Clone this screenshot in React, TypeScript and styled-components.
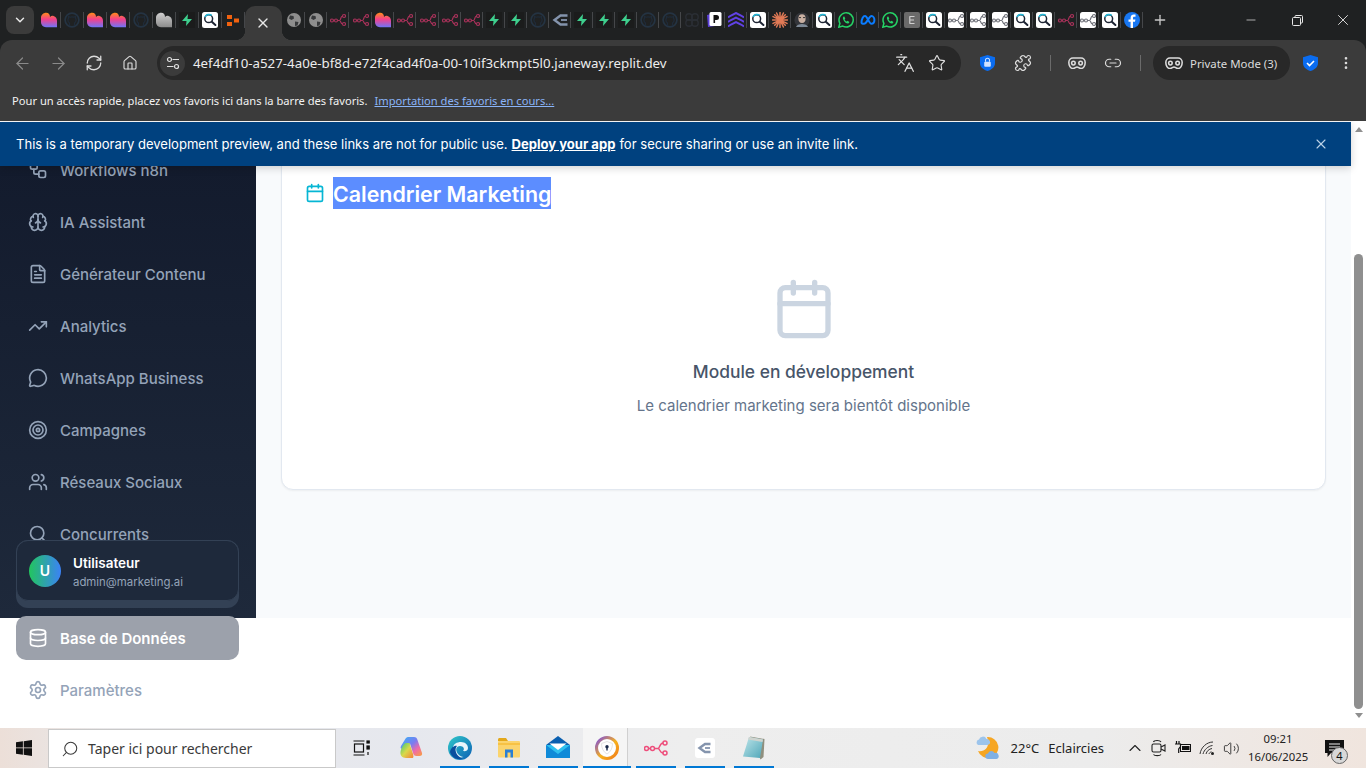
import React from 'react';
import styled, { createGlobalStyle } from 'styled-components';
import {
  ArrowLeft, ArrowRight, RefreshCw, Home, Languages, Star, Puzzle, Link2, X, Minus, Plus,
  ChevronDown, ChevronUp, Search, MoreVertical, Workflow, Brain, FileText, TrendingUp,
  MessageCircle, Target, Users, Database, Settings, Calendar, Volume2,
} from 'lucide-react';

const GlobalStyle = createGlobalStyle`
  html, body { margin: 0; padding: 0; background: #fff; overflow: hidden; }
  * { box-sizing: border-box; }
  body { font-family: Inter, "Noto Sans", sans-serif; }
`;

const Screen = styled.div`width: 1366px; height: 768px; display: flex; flex-direction: column; overflow: hidden;`;
const ChromeFrame = styled.header`background: #1f2122; flex: none; font-family: "Noto Sans", sans-serif;`;
const TabStrip = styled.div`height: 40px; display: flex; align-items: center;`;
const TabMenu = styled.button`
  width: 28px; height: 28px; margin: 0 3.5px 0 6px; border: 0; border-radius: 8px; background: #3b3b3b;
  color: #e8e8e8; display: flex; align-items: center; justify-content: center; padding: 0;
`;
const TabSlot = styled.div<{ $w: number }>`
  position: relative; width: ${p => p.$w}px; height: 40px; display: flex; align-items: center; justify-content: center; flex: none;
  &::after { content: ''; position: absolute; right: 0; top: 12px; height: 16px; width: 1px; background: #45474a; }
`;
const ActiveTab = styled.div`
  position: relative; width: 37px; height: 34px; margin-top: 6px; flex: none; background: #3b3b3b;
  border-radius: 10px 10px 0 0; color: #e8e8e8; display: flex; align-items: center; justify-content: center; padding-right: 2px; margin-left: 0.5px; margin-right: 0.5px;
  &::before, &::after { content: ''; position: absolute; bottom: 0; width: 10px; height: 10px; }
  &::before { left: -10px; background: radial-gradient(circle at 0 0, transparent 10px, #3b3b3b 10.5px); }
  &::after { right: -10px; background: radial-gradient(circle at 100% 0, transparent 10px, #3b3b3b 10.5px); }
`;
const NewTab = styled.div`margin-left: 6px; width: 22px; display: flex; justify-content: center; color: #c8c8c8;`;
const WindowControls = styled.div`margin-left: auto; display: flex; color: #e8e8e8; height: 40px;`;
const WindowButton = styled.div`width: 46px; display: flex; align-items: center; justify-content: center;`;
const ToolArea = styled.div`background: #3b3b3b; height: 81px; border-radius: 12px 12px 0 0; position: relative;`;
const ToolRow = styled.div`display: flex; align-items: center; height: 40px; padding: 6px 0 0 4px;`;
const ToolButton = styled.div<{ $dim?: boolean }>`
  width: 36px; height: 34px; display: flex; align-items: center; justify-content: center; flex: none;
  color: ${p => (p.$dim ? '#8a8a8a' : '#dcdcdc')};
`;
const AddressBar = styled.div`
  width: 804px; height: 34px; margin: 0 8px 0 9px; background: #282828; border-radius: 17px; flex: none;
  display: flex; align-items: center; padding: 0 8px 0 3px; color: #e0e0e0;
`;
const SiteButton = styled.div`
  width: 25px; height: 25px; border-radius: 50%; background: #3b3b3b; display: flex; align-items: center; justify-content: center; flex: none;
`;
const Url = styled.span`margin-left: 8px; font-size: 13.3px; color: #ededed; white-space: nowrap; flex: 1;`;
const BarIcon = styled.span`width: 32px; display: flex; justify-content: center; flex: none;`;
const ToolSep = styled.span`width: 1px; height: 16px; background: #6b6b6b; margin: 0 8px 0 9px; flex: none;`;
const PrivatePill = styled.div`
  width: 137px; height: 34px; border-radius: 17px; background: #282828; display: flex; align-items: center; gap: 7px; padding-left: 12px;
  font-size: 11.4px; color: #dcdcdc; white-space: nowrap; flex: none; margin: 0 2px 0 4px;
`;
const BookmarkBar = styled.div`
  height: 41px; padding: 0 0 0 12px; display: flex; align-items: center; font-size: 11.16px; color: #f2f2f2; white-space: nowrap; gap: 7px;
`;
const BookmarkLink = styled.a`color: #8ab4f8; text-decoration: underline;`;

const Viewport = styled.main`flex: 1; min-height: 0; display: flex; overflow: hidden; background: #fff; padding-top: 1px; background-clip: content-box;`;
const PageColumn = styled.div`flex: 1; min-width: 0; display: flex; flex-direction: column;`;
const Banner = styled.div`
  position: relative; z-index: 5; height: 44px; flex: none; background: #00417f; color: #fff; display: flex; align-items: center; padding: 0 16px;
  font-size: 13.05px; white-space: nowrap; box-shadow: 0 2px 8px rgba(0,0,0,.18);
  a { color: #fff; font-weight: 700; text-decoration: underline; margin: 0 4px; }
`;
const BannerClose = styled.span`margin-left: auto; padding-right: 6px; color: #bcd2e8; display: flex;`;
const Shell = styled.div`height: 452px; display: flex; flex: none;`;
const Sidebar = styled.aside`
  position: relative; width: 256px; flex: none; background: linear-gradient(180deg, #131b2d 0%, #1e293b 100%);
`;
const Nav = styled.nav`margin-top: -18px; padding: 0 17px 0 16px; display: flex; flex-direction: column; gap: 8px;`;
const NavItem = styled.div<{ $active?: boolean }>`
  height: 44px; border-radius: 10px; padding: 0 12px; display: flex; align-items: center; gap: 12px; font-size: 15px;
  font-weight: ${p => (p.$active ? 600 : 500)};
  color: ${p => (p.$active ? '#fff' : '#94a3b8')};
  background: ${p => (p.$active ? '#9ca1ab' : 'transparent')};
  white-space: nowrap;
`;
const UserCard = styled.div`
  position: absolute; left: 16px; bottom: 10px; width: 223px; padding-bottom: 7px; background: #334155; border-radius: 12px; z-index: 2;
`;
const UserInner = styled.div`
  height: 61px; border: 1px solid #334155; border-radius: 12px; background: #1e293b; display: flex; align-items: center; gap: 12px; padding: 0 0 0 12px;
`;
const Avatar = styled.div`
  width: 32px; height: 32px; border-radius: 50%; background: linear-gradient(90deg, #22c55e, #3b82f6); color: #fff; font-size: 14px; font-weight: 600;
  display: flex; align-items: center; justify-content: center; flex: none;
`;
const UserText = styled.div`padding-top: 4px;`;
const UserName = styled.div`font-size: 13.5px; font-weight: 600; color: #fff; line-height: 20px;`;
const UserMail = styled.div`font-size: 11.4px; color: #94a3b8; line-height: 19px;`;
const MainArea = styled.section`flex: 1; min-width: 0; background: #f8fafc; padding: 0 25px;`;
const Card = styled.div`
  margin-top: -24px; height: 348px; background: #fff; border: 1px solid #e2e8f0; border-radius: 12px; padding: 34px 23px 0;
  box-shadow: 0 1px 2px rgba(0,0,0,.05);
`;
const CardTitle = styled.h2`margin: 0; display: flex; align-items: center; gap: 8px; height: 32px; color: #06b6d4; font-size: 21.4px; font-weight: 600;`;
const Selected = styled.span`background: #5c8dff; color: #fff; line-height: 30px; padding-top: 2px; white-space: nowrap;`;
const Empty = styled.div`display: flex; flex-direction: column; align-items: center; padding-top: 68px; color: #cbd5e1;`;
const EmptyTitle = styled.h3`margin: 17px 0 8px; font-size: 17.4px; line-height: 28px; font-weight: 500; color: #475569;`;
const EmptyText = styled.p`margin: 0; font-size: 15px; line-height: 24px; color: #64748b;`;

const Scrollbar = styled.div`width: 15px; flex: none; background: #fff; display: flex; flex-direction: column; align-items: center; position: relative;`;
const ArrowUp = styled.div`margin-top: 5px; border: 4.5px solid transparent; border-top: 0; border-bottom: 5px solid #8f8f8f;`;
const Thumb = styled.div`width: 9px; height: 455px; margin-top: 122px; border-radius: 5px; background: #8f8f8f;`;
const ArrowDown = styled.div`margin-top: 4px; border: 4.5px solid transparent; border-bottom: 0; border-top: 5px solid #8f8f8f;`;

const Taskbar = styled.footer`
  height: 40px; flex: none; display: flex; align-items: stretch; color: #222; font-family: "Noto Sans", sans-serif;
  background: linear-gradient(90deg, #ecdfd8 0%, #e9e8ea 8%, #e6e8ee 30%, #eeeeee 50%, #ececec 80%, #f0e5de 100%);
`;
const StartButton = styled.div`width: 48px; display: flex; align-items: center; justify-content: center; flex: none;`;
const SearchBox = styled.div`
  width: 288px; margin-top: 1px; flex: none; background: #fff; border: 1px solid #c9c9c9; display: flex; align-items: center; padding-left: 12px; gap: 9px; font-size: 14px; color: #3a3a3a;
`;
const MirroredSearch = styled(Search)`transform: scaleX(-1);`;
const TaskView = styled.div`width: 50.5px; flex: none; display: flex; align-items: center; justify-content: center;`;
const AppSlot = styled.div<{ $open?: boolean; $active?: boolean }>`
  position: relative; width: 49px; flex: none; display: flex; align-items: center; justify-content: center;
  background: ${p => (p.$active ? 'linear-gradient(90deg, #f5f5f5 44px, #d0d0d0 44px, #d0d0d0 45px, transparent 45px)' : 'transparent')};
  &::after { content: ''; display: ${p => (p.$open ? 'block' : 'none')}; position: absolute; left: ${p => (p.$active ? 0 : '4.5px')}; right: ${p => (p.$active ? '1px' : '4.5px')}; bottom: 0; height: 2px; background: #0078d4; }
`;
const Weather = styled.div`margin-left: auto; margin-right: 19px; display: flex; align-items: center; font-size: 13px; white-space: nowrap;`;
const WeatherTemp = styled.span`margin: 0 9px 0 10px;`;
const TrayIcon = styled.div`width: 24px; flex: none; display: flex; align-items: center; justify-content: center; color: #222;`;
const Clock = styled.div`width: 60px; margin-left: 5px; font-size: 11.3px; line-height: 18px; text-align: center; display: flex; flex-direction: column; justify-content: center; white-space: nowrap;`;
const Notify = styled.div`position: relative; width: 40px; margin: 0 12px 0 6px; display: flex; align-items: center; justify-content: center;`;
const NotifyBadge = styled.span`
  position: absolute; left: 17px; top: 19px; width: 17px; height: 17px; border-radius: 50%; background: #d8d8d8; border: 1px solid #666; font-size: 11px; line-height: 15px; text-align: center; color: #111;
`;
const DefsSvg = styled.svg`position: absolute; width: 0; height: 0;`;

const Defs = () => (
  <DefsSvg aria-hidden="true">
    <defs>
      <linearGradient id="lov" x1="0" y1="0" x2="0" y2="1">
        <stop offset="0" stopColor="#ff8a1a" /><stop offset=".45" stopColor="#f4418a" /><stop offset="1" stopColor="#6f74f8" />
      </linearGradient>
      <linearGradient id="lovg" x1="0" y1="0" x2="0" y2="1">
        <stop offset="0" stopColor="#cfcfcf" /><stop offset="1" stopColor="#8c8c8c" />
      </linearGradient>
      <linearGradient id="cop" x1="0" y1="0" x2="1" y2="1">
        <stop offset="0" stopColor="#35b4f5" /><stop offset=".45" stopColor="#7b7cf0" /><stop offset=".7" stopColor="#f06aa8" /><stop offset="1" stopColor="#f9a13a" />
      </linearGradient>
      <linearGradient id="cop2" x1="0" y1="0" x2="1" y2="1">
        <stop offset="0" stopColor="#37c978" /><stop offset=".5" stopColor="#d9d94a" /><stop offset="1" stopColor="#f7803a" />
      </linearGradient>
      <linearGradient id="edge" x1="0" y1="0" x2="1" y2="1">
        <stop offset="0" stopColor="#30c9c9" /><stop offset="1" stopColor="#0c5fb5" />
      </linearGradient>
      <linearGradient id="avast" x1="0" y1="0" x2="1" y2="1">
        <stop offset="0" stopColor="#7a4be0" /><stop offset=".55" stopColor="#f7b21d" /><stop offset="1" stopColor="#f07a1a" />
      </linearGradient>
      <linearGradient id="note" x1="0" y1="0" x2="1" y2="1">
        <stop offset="0" stopColor="#bfe6ea" /><stop offset="1" stopColor="#4fa6b8" />
      </linearGradient>
    </defs>
  </DefsSvg>
);

const Svg: React.FC<{ s?: number; v?: number; children: React.ReactNode }> = ({ s = 16, v = 16, children }) => (
  <svg width={s} height={s} viewBox={`0 0 ${v} ${v}`} fill="none">{children}</svg>
);

const HEART = 'M5.2 .8C7.800 .8 9 2.800 9 5 10 4 11.200 3.600 12.500 4 14.800 4.700 16 6.600 16 9V15.200H5C2 15.200 0 12.800 0 10V6C0 3 2.300 .8 5.200 .8Z';
const N8N = (c: string) => (
  <g stroke={c} strokeWidth="1.2">
    <circle cx="2" cy="8.5" r="1.5" /><circle cx="6" cy="8.5" r="1.5" /><circle cx="14" cy="4" r="1.5" /><circle cx="14" cy="12" r="1.5" />
    <path d="M3.5 8.5h1M7.5 8.5h2c1.5 0 1-4.5 3-4.5M9.5 8.5c1.5 0 1 3.5 3 3.5" />
  </g>
);
const Chip = ({ children }: { children: React.ReactNode }) => (
  <Svg><rect width="16" height="16" rx="2.5" fill="#fff" />{children}</Svg>
);

const Fav: React.FC<{ k: string }> = ({ k }) => {
  switch (k) {
    case 'heart': return <Svg><path d={HEART} fill="url(#lov)" /></Svg>;
    case 'gray': return <Svg><path d={HEART} fill="url(#lovg)" /></Svg>;
    case 'gh': return <Svg><circle cx="8" cy="8" r="6.9" stroke="#243342" strokeWidth="1.7" /><path d="M5.5 14V11c-1-.6-1.6-1.6-1.6-3 0-.8.3-1.4.7-1.9V4.500l1.7.7c1-.3 2.300-.3 3.400 0l1.700-.7v1.600c.4.5.7 1.100.7 1.900 0 1.400-.6 2.400-1.600 3v3" stroke="#1f2b39" strokeWidth="1.2" /></Svg>;
    case 'zap': return <Svg><rect width="16" height="16" fill="#1b1c1c" /><path d="M9 2 3 9h4.500L7 14l6-7H8.500Z" fill="#3ecf8e" /></Svg>;
    case 'search': return <Chip><circle cx="6.700" cy="6.700" r="3.900" stroke="#1d2433" strokeWidth="1.500" /><path d="M3 5A4.500 4.500 0 0 1 9.700 3.300" stroke="#22b8d8" strokeWidth="1.600" /><path d="m9.800 9.800 3.600 3.200" stroke="#1d2433" strokeWidth="2" strokeLinecap="round" /></Chip>;
    case 'orange': return <Svg><path d="M2 3h5v4H2ZM2 10h5v4H2ZM9 6.500h5v4H9Z" fill="#f2620f" /></Svg>;
    case 'globe': return <Svg><circle cx="8" cy="8" r="7" fill="#8e8e8e" /><path d="M4 3.500 7.500 4l.5 2.500L5.500 8 3 6.500ZM9 9.500l3.500.5-1 3.500-2.500.5Z" fill="#37393b" /></Svg>;
    case 'n8n': return <Svg>{N8N('#a8325a')}</Svg>;
    case 'n8nw': return <Chip>{N8N('#70727a')}</Chip>;
    case 'arrow': return <Svg><path d="M15.500 3.500H8.500L2.500 8l6 4.500h7" stroke="#8494ad" strokeWidth="2.400" /><path d="M15 8H9" stroke="#8494ad" strokeWidth="1.800" /></Svg>;
    case 'figma': return <Svg><g stroke="#2a2e34" strokeWidth="1.400"><circle cx="5" cy="5" r="3.200" /><circle cx="11" cy="5" r="3.200" /><circle cx="5" cy="11" r="3.200" /><circle cx="11" cy="11" r="3.200" /></g></Svg>;
    case 'p': return <Svg><path d="M1 3l8-2v13l-7 1Z" fill="#5a3fd6" /><rect x="3.500" y="0" width="12" height="14" rx="1.500" fill="#fff" /><path d="M7.500 11V3h3a2 2 0 0 1 0 5H9.100v3Z" fill="#111" /></Svg>;
    case 'waves': return <Svg><path d="M0 5.500 3 3.500 8 1l5 2.500 3 2M0 10l3-2 5-2.500L13 8l3 2M0 14.500l3-2L8 10l5 2.500 3 2" stroke="#6142e6" strokeWidth="2" /></Svg>;
    case 'burst': return <Svg><g stroke="#e07a56" strokeWidth="1.500" strokeLinecap="round"><path d="M8 .5v15M.5 8h15M2.700 2.700l10.600 10.600M13.300 2.700 2.700 13.300M4.600 1l6.800 14M11.400 1 4.600 15M1 4.600l14 6.800M15 4.600 1 11.400" /></g></Svg>;
    case 'face': return <Svg><circle cx="8" cy="8" r="7.600" fill="#33353a" /><ellipse cx="8" cy="6.600" rx="3.600" ry="4.400" fill="#c9b0a2" /><path d="M2 15c1-4 11-4 12 0Z" fill="#7e8a98" /><path d="M5 5.600h2M9 5.600h2" stroke="#333" /></Svg>;
    case 'wa': return <Svg><path d="M.8 15.200l1.100-3.900A7.100 7.100 0 1 1 4.700 14.100Z" stroke="#25d366" strokeWidth="1.500" /><path d="M5.600 4.600c-1.200 1-.8 2.800.6 4.600s3.200 2.700 4.500 2l.8-1.200-2-1.200-.8.7C7.800 9.200 7 8.400 6.600 7.300l.7-.8-1-2Z" fill="#25d366" /></Svg>;
    case 'meta': return <Svg><path d="M1.500 10.500C1.500 7 3.200 4 5 4c2.400 0 4 7.800 6.400 7.800 1.500 0 3-1 3-3.800 0-2-1.200-4-2.900-4C9 4 7 11.800 4 11.800c-1.500 0-2.500-.5-2.500-1.300Z" stroke="#0a7cff" strokeWidth="2" /></Svg>;
    case 'e': return <Svg><rect width="16" height="16" rx="2" fill="#6a6a6a" /><path d="M5.500 4.500h5M5.500 8h4.500M5.500 11.500h5M5.800 4.500v7" stroke="#cfcfcf" strokeWidth="1.200" /></Svg>;
    case 'fb': return <Svg><circle cx="8" cy="8" r="8" fill="#1877f2" /><path d="M9 16V9.800h2l.4-2.400H9V6c0-.8.3-1.300 1.400-1.300h1.100V2.600C11 2.500 10.500 2.400 9.800 2.400 8 2.400 6.600 3.600 6.600 5.700v1.700H4.500v2.400h2.100V16Z" fill="#fff" /></Svg>;
    default: return null;
  }
};

const Mask = ({ s = 18 }: { s?: number }) => (
  <svg width={s} height={s * 0.7} viewBox="0 0 20 14" fill="none" stroke="currentColor" strokeWidth="1.700">
    <path d="M5.500 1.200h9c2.500 0 4.600 2 4.600 5s-1.800 6.600-4.600 6.600c-2 0-3-1.800-4.500-1.800s-2.500 1.800-4.500 1.800C2.700 12.800.9 9.200.9 6.200s2.100-5 4.600-5Z" />
    <circle cx="6" cy="6.800" r="2" /><circle cx="14" cy="6.800" r="2" />
  </svg>
);
const SiteIcon = () => (
  <svg width="14" height="14" viewBox="0 0 14 14" fill="none" stroke="#e0e0e0" strokeWidth="1.200">
    <circle cx="3.500" cy="3.500" r="2" /><path d="M6.500 3.500H13M1 10.500h6.500" /><circle cx="10.500" cy="10.500" r="2" />
  </svg>
);
const Shield = ({ lock }: { lock?: boolean }) => (
  <svg width="15" height="16" viewBox="0 0 15 16">
    <path d="M7.500 0 15 2.200V8c0 4-3 6.500-7.500 8C3 14.500 0 12 0 8V2.200Z" fill="#0a6cf0" />
    {lock ? <g><rect x="4.200" y="6.700" width="6.600" height="5" rx="1" fill="#cfe2ff" /><path d="M5.500 6.700V5.200a2 2 0 0 1 4 0v1.500" stroke="#cfe2ff" strokeWidth="1.100" fill="none" /></g>
      : <path d="m4 8 2.500 2.500L11 6" stroke="#fff" strokeWidth="1.600" fill="none" />}
  </svg>
);
const WinLogo = () => (
  <svg width="16" height="16" viewBox="0 0 16 16" fill="#111"><path d="M0 2.300 6.900 1.300V7.500H0ZM7.700 1.200 16 0V7.500H7.700ZM0 8.300H6.900V14.700L0 13.700ZM7.700 8.300H16V16L7.700 14.800Z" /></svg>
);
const TaskViewIcon = () => (
  <svg width="17" height="16" viewBox="0 0 17 16" fill="none" stroke="#111" strokeWidth="1.200">
    <path d="M.5 1h11M.5 15h11" /><rect x="1.500" y="4" width="9" height="8" /><rect x="14" y="1" width="2.200" height="2" fill="#111" /><rect x="14" y="6" width="2.200" height="3" fill="#111" /><path d="M15 12v3" />
  </svg>
);
const CopilotIcon = () => (
  <svg width="24" height="24" viewBox="0 0 24 24">
    <path d="M9 1h6c2 0 3 1 3.500 3L23 17c.5 2-.5 3-2.500 3h-3c-2 0-3-1-3.500-3L11 7.500 8 13H3.500C2 13 1 12 2 10L6 3.500C6.800 2 7.800 1 9 1Z" fill="url(#cop)" />
    <path d="M7 7h3.500l3.500 11c.5 2 1 4-1 4H7C3 22 1 19 1.500 16 2 12 5 7 7 7Z" fill="url(#cop2)" />
  </svg>
);
const EdgeIcon = () => (
  <svg width="24" height="24" viewBox="0 0 24 24">
    <circle cx="12" cy="12" r="12" fill="url(#edge)" />
    <path d="M5 12c0-4 4-6 8-6 4.500 0 7 3 7 6s-3 3.500-5 3c2-2 .5-5-3-5-4 0-5 4-2 8 1.500 2 4 3 5.500 3-5 2-10.500-2.500-10.500-9Z" fill="#e9f5fb" />
    <path d="M2 16c1-5 5-7 7-6-2 2-2 6 .5 9 1 1.200 3 3 5 3.500C9 24.500 3.500 21 2 16Z" fill="#0b4f9e" />
  </svg>
);
const ExplorerIcon = () => (
  <svg width="24" height="20" viewBox="0 0 24 20">
    <path d="M1 1.500C1 .700 1.700 0 2.500 0H9l2 3H1Z" fill="#e3a81c" />
    <rect x="1" y="3" width="22" height="16.500" rx="1" fill="#fbd46d" />
    <rect x="1" y="5" width="22" height="2" fill="#f7c244" />
    <path d="M8 19.500v-8h8v8h-2.500v-5h-3v5Z" fill="#2a7fd4" />
  </svg>
);
const MailIcon = () => (
  <svg width="24" height="24" viewBox="0 0 24 24">
    <path d="M0 9 12 0l12 9v2H0Z" fill="#0a5fb0" />
    <path d="M0 9h24v13H0Z" fill="#2fc0ef" />
    <path d="M0 9l12 9 12-9v13H0Z" fill="#0f8ad8" />
    <path d="M3.500 7.500h17L12 14Z" fill="#fff" />
  </svg>
);
const BrowserIcon = () => (
  <svg width="24" height="24" viewBox="0 0 24 24">
    <circle cx="12" cy="12" r="10.500" fill="none" stroke="url(#avast)" strokeWidth="3" />
    <circle cx="12" cy="12" r="8.500" fill="#fff" />
    <path d="M12 5.500 17.500 7.500c0 5-2 8.500-5.500 10.500C8.500 16 6.500 12.500 6.500 7.500Z" fill="#fff" stroke="#e5e5e5" />
    <circle cx="12" cy="10.800" r="1.700" fill="#1b2a4a" /><rect x="11.300" y="11.500" width="1.400" height="3" fill="#1b2a4a" />
  </svg>
);
const N8nApp = () => (
  <svg width="24" height="16" viewBox="0 0 24 16" fill="none" stroke="#ee4f7c" strokeWidth="1.500">
    <circle cx="2.500" cy="8.500" r="2" /><circle cx="8.500" cy="8.500" r="2" /><circle cx="21" cy="3" r="2" /><circle cx="21" cy="13" r="2" />
    <path d="M4.500 8.500h2M10.500 8.500H14c2 0 1.500-5.500 5-5.500M14 8.500c2 0 1.500 4.500 5 4.500" />
  </svg>
);
const ReplitApp = () => (
  <svg width="20" height="20" viewBox="0 0 20 20"><rect width="20" height="20" rx="3" fill="#fff" /><path d="M15.500 6H10L4.500 10l5.500 4h5.500" fill="none" stroke="#8494ad" strokeWidth="2.400" /><path d="M15 10h-5" stroke="#8494ad" strokeWidth="1.800" /></svg>
);
const NotepadApp = () => (
  <svg width="24" height="26" viewBox="0 0 24 26">
    <path d="M8 1.500 22.500 4l-1 18-3 2.500L9 3Z" fill="#8f8f7e" />
    <path d="M7 2 21 4.500 18 23 1 21.500Z" fill="url(#note)" />
    <path d="M7 2 21 4.500 20.500 7 6 4.500Z" fill="#cfd4cf" />
  </svg>
);
const WeatherIcon = () => (
  <svg width="25" height="24" viewBox="0 0 25 24">
    <path d="M11 1a10.500 10.500 0 1 1-9 14c8 1.500 12.500-6 9-14Z" fill="#f6a623" />
    <path d="M2 9a3 3 0 0 1 1-5.500A4 4 0 0 1 10.500 3 3 3 0 0 1 11.500 9Z" fill="#9cc4ec" />
    <path d="M12 23a2.700 2.700 0 0 1 0-5.400 3.500 3.500 0 0 1 6.500-.6 3 3 0 0 1 2 6Z" fill="#7fb0e4" />
  </svg>
);
const MeetIcon = () => (
  <svg width="16" height="18" viewBox="0 0 16 18" fill="none" stroke="#222" strokeWidth="1.100">
    <rect x="1" y="5" width="9" height="8" rx="1.500" /><path d="m10 8 4-2v6l-4-2M2.500 3C3 1 9 1 10 3M2.500 15.500c1 1.500 6.500 1.500 7.500 0" />
  </svg>
);
const BatteryIcon = () => (
  <svg width="18" height="14" viewBox="0 0 18 14" fill="none">
    <path d="M2.500 0v3M5 0v3M1 3h5.500v2.500L4.700 8v4" stroke="#111" strokeWidth="1.200" />
    <rect x="6.500" y="3.500" width="10" height="7" stroke="#111" /><rect x="8" y="5" width="7.500" height="4" fill="#111" />
  </svg>
);
const WifiIcon = () => (
  <svg width="17" height="15" viewBox="0 0 17 15" fill="none" stroke="#333" strokeWidth="1">
    <path d="M1 13C2 6 8 1 14 1M4 13c1-4 5-8 9.500-8.500M7 13c.8-3 3-5 6-5.500" /><circle cx="13.500" cy="12.500" r="1.500" fill="#222" stroke="none" /><path d="M10 13c.300-1 1-1.800 2.500-2.200" />
  </svg>
);
const NotifyIcon = () => (
  <svg width="19" height="19" viewBox="0 0 19 19"><path d="M0 1h19v13H6l-3.500 4v-4H0Z" fill="#111" /><path d="M4 5h11M4 8h11M4 11h8" stroke="#eee" /></svg>
);

const firstTabs = ['heart', 'gh', 'heart', 'heart', 'gh', 'gray', 'zap', 'search', 'orange'];
const otherTabs = ['globe', 'globe', 'n8n', 'n8n', 'heart', 'n8n', 'n8n', 'n8n', 'n8n', 'zap', 'zap', 'gh', 'arrow', 'zap', 'zap', 'zap', 'gh', 'gh', 'figma', 'p', 'waves', 'search', 'burst', 'face', 'search', 'wa', 'meta', 'wa', 'e', 'search', 'n8nw', 'n8nw', 'n8nw', 'search', 'search', 'n8n', 'n8nw', 'search', 'fb'];

const navItems: { icon: React.ElementType; label: string }[] = [
  { icon: Workflow, label: 'Workflows n8n' },
  { icon: Brain, label: 'IA Assistant' },
  { icon: FileText, label: 'Générateur Contenu' },
  { icon: TrendingUp, label: 'Analytics' },
  { icon: MessageCircle, label: 'WhatsApp Business' },
  { icon: Target, label: 'Campagnes' },
  { icon: Users, label: 'Réseaux Sociaux' },
  { icon: Search, label: 'Concurrents' },
];

export default function App() {
  return (
    <Screen>
      <GlobalStyle />
      <Defs />
      <ChromeFrame>
        <TabStrip>
          <TabMenu><ChevronDown size={14} strokeWidth={2.5} /></TabMenu>
          {firstTabs.map((k, i) => <TabSlot $w={23} key={i}><Fav k={k} /></TabSlot>)}
          <ActiveTab><X size={16} strokeWidth={2} /></ActiveTab>
          {otherTabs.map((k, i) => <TabSlot $w={i < 9 ? 22.33 : 22} key={i}><Fav k={k} /></TabSlot>)}
          <NewTab><Plus size={16} strokeWidth={2} /></NewTab>
          <WindowControls>
            <WindowButton><Minus size={14} strokeWidth={1.2} /></WindowButton>
            <WindowButton>
              <svg width="11" height="11" viewBox="0 0 11 11" fill="none" stroke="currentColor"><rect x=".5" y="2.500" width="8" height="8" rx="1" /><path d="M3 2.500V1.500a1 1 0 0 1 1-1h5.500a1 1 0 0 1 1 1V7a1 1 0 0 1-1 1h-1" /></svg>
            </WindowButton>
            <WindowButton><X size={18} strokeWidth={1.2} /></WindowButton>
          </WindowControls>
        </TabStrip>
        <ToolArea>
          <ToolRow>
            <ToolButton $dim><ArrowLeft size={19} strokeWidth={1.5} /></ToolButton>
            <ToolButton $dim><ArrowRight size={19} strokeWidth={1.5} /></ToolButton>
            <ToolButton><RefreshCw size={18} strokeWidth={1.7} /></ToolButton>
            <ToolButton><Home size={16} strokeWidth={1.7} /></ToolButton>
            <AddressBar>
              <SiteButton><SiteIcon /></SiteButton>
              <Url>4ef4df10-a527-4a0e-bf8d-e72f4cad4f0a-00-10if3ckmpt5l0.janeway.replit.dev</Url>
              <BarIcon><Languages size={20} strokeWidth={1.5} /></BarIcon>
              <BarIcon><Star size={18} strokeWidth={1.5} /></BarIcon>
            </AddressBar>
            <ToolButton><Shield lock /></ToolButton>
            <ToolButton><Puzzle size={18} strokeWidth={1.6} /></ToolButton>
            <ToolSep />
            <ToolButton><Mask /></ToolButton>
            <ToolButton><Link2 size={18} strokeWidth={1.6} /></ToolButton>
            <ToolSep />
            <PrivatePill><Mask />Private Mode (3)</PrivatePill>
            <ToolButton><Shield /></ToolButton>
            <ToolButton><MoreVertical size={16} strokeWidth={2} /></ToolButton>
          </ToolRow>
          <BookmarkBar>
            Pour un accès rapide, placez vos favoris ici dans la barre des favoris.
            <BookmarkLink>Importation des favoris en cours...</BookmarkLink>
          </BookmarkBar>
        </ToolArea>
      </ChromeFrame>
      <Viewport>
        <PageColumn>
          <Banner>
            This is a temporary development preview, and these links are not for public use.
            <a>Deploy your app</a>
            for secure sharing or use an invite link.
            <BannerClose><X size={16} strokeWidth={1.6} /></BannerClose>
          </Banner>
          <Shell>
            <Sidebar>
              <Nav>
                {navItems.map(({ icon: Icon, label }) => (
                  <NavItem key={label}><Icon size={20} strokeWidth={2} />{label}</NavItem>
                ))}
                <NavItem aria-hidden="true" />
                <NavItem $active><Database size={20} strokeWidth={2} />Base de Données</NavItem>
                <NavItem><Settings size={20} strokeWidth={2} />Paramètres</NavItem>
              </Nav>
              <UserCard>
                <UserInner>
                  <Avatar>U</Avatar>
                  <UserText>
                    <UserName>Utilisateur</UserName>
                    <UserMail>admin@marketing.ai</UserMail>
                  </UserText>
                </UserInner>
              </UserCard>
            </Sidebar>
            <MainArea>
              <Card>
                <CardTitle><Calendar size={20} strokeWidth={2} /><Selected>Calendrier Marketing</Selected></CardTitle>
                <Empty>
                  <Calendar size={64} strokeWidth={2} />
                  <EmptyTitle>Module en développement</EmptyTitle>
                  <EmptyText>Le calendrier marketing sera bientôt disponible</EmptyText>
                </Empty>
              </Card>
            </MainArea>
          </Shell>
        </PageColumn>
        <Scrollbar>
          <ArrowUp />
          <Thumb />
          <ArrowDown />
        </Scrollbar>
      </Viewport>
      <Taskbar>
        <StartButton><WinLogo /></StartButton>
        <SearchBox><MirroredSearch size={18} strokeWidth={1.4} />Taper ici pour rechercher</SearchBox>
        <TaskView><TaskViewIcon /></TaskView>
        <AppSlot><CopilotIcon /></AppSlot>
        <AppSlot $open><EdgeIcon /></AppSlot>
        <AppSlot $open><ExplorerIcon /></AppSlot>
        <AppSlot $open><MailIcon /></AppSlot>
        <AppSlot $open $active><BrowserIcon /></AppSlot>
        <AppSlot $open><N8nApp /></AppSlot>
        <AppSlot $open><ReplitApp /></AppSlot>
        <AppSlot $open><NotepadApp /></AppSlot>
        <Weather><WeatherIcon /><WeatherTemp>22°C</WeatherTemp>Eclaircies</Weather>
        <TrayIcon><ChevronUp size={20} strokeWidth={1.3} /></TrayIcon>
        <TrayIcon><MeetIcon /></TrayIcon>
        <TrayIcon><BatteryIcon /></TrayIcon>
        <TrayIcon><WifiIcon /></TrayIcon>
        <TrayIcon><Volume2 size={17} strokeWidth={1.2} /></TrayIcon>
        <Clock><span>09:21</span><span>16/06/2025</span></Clock>
        <Notify><NotifyIcon /><NotifyBadge>4</NotifyBadge></Notify>
      </Taskbar>
    </Screen>
  );
}
